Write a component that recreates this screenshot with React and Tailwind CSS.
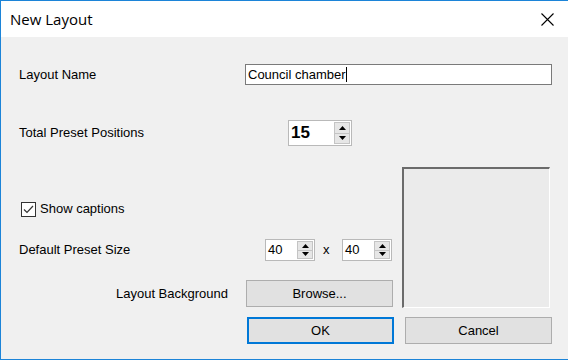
import React from 'react';

const font = { fontFamily: '"Liberation Sans", Arial, sans-serif' };

const Arrows = () => (
  <div className="flex flex-col w-[16px] h-full">
    <div className="flex-1 flex items-center justify-center bg-[#e6e6e6] border border-[#c4c4c4]">
      <svg width="7" height="4" viewBox="0 0 7 4"><path d="M3.5 0 L7 4 L0 4 Z" fill="#000" /></svg>
    </div>
    <div className="flex-1 flex items-center justify-center bg-[#e6e6e6] border border-t-0 border-[#c4c4c4]">
      <svg width="7" height="4" viewBox="0 0 7 4"><path d="M0 0 L7 0 L3.5 4 Z" fill="#000" /></svg>
    </div>
  </div>
);

const Spinner = ({ value, className, textClass }) => (
  <div className={`flex items-stretch bg-white border border-[#b9b9b9] p-[1px] ${className}`}>
    <div className={`flex-1 flex items-center pl-[1px] ${textClass}`}>{value}</div>
    <Arrows />
  </div>
);

const Button = ({ children, primary }) => (
  <div
    className={`w-[147px] h-[27px] flex items-center justify-center bg-[#e1e1e1] text-[13px] text-black ${
      primary ? 'border-2 border-[#0078d7]' : 'border border-[#adadad]'
    }`}
  >
    {children}
  </div>
);

export default function App() {
  return (
    <div
      style={font}
      className="w-[568px] h-[360px] flex flex-col bg-[#f0f0f0] border-t border-l border-b border-[#1c84d8] text-[13px] text-black overflow-hidden"
    >
      {/* title bar */}
      <div className="h-[36px] bg-white flex items-center justify-between pl-[9px] pr-[14px] shrink-0">
        <span className="text-[15px] pt-[1px]" style={{ fontFamily: '"Open Sans", "Noto Sans", sans-serif' }}>
          New Layout
        </span>
        <svg width="13" height="13" viewBox="0 0 13 13" className="mt-[1px]">
          <path d="M0.5 0.5 L12.5 12.5 M12.5 0.5 L0.5 12.5" stroke="#000" strokeWidth="1.1" />
        </svg>
      </div>

      {/* body */}
      <div className="flex flex-col pl-[18px] pt-[27px]">
        <div className="flex items-center h-[21px]">
          <span className="w-[226px]">Layout Name</span>
          <div className="w-[307px] h-[21px] bg-white border border-[#7a7a7a] flex items-center pl-[2px]">
            <span>Council chamber</span>
            <span className="w-[1px] h-[15px] bg-black" />
          </div>
        </div>

        <div className="flex items-center h-[26px] mt-[35px]">
          <span className="w-[269px]">Total Preset Positions</span>
          <Spinner value="15" className="w-[64px] h-[26px]" textClass="text-[17px] font-bold" />
        </div>

        <div className="flex mt-[21px]">
          <div className="w-[383px] flex flex-col">
            <div className="flex items-center h-[16px] mt-[34px] ml-[2px]">
              <div className="w-[15px] h-[15px] border border-[#333] bg-white flex items-center justify-center">
                <svg width="11" height="9" viewBox="0 0 11 9">
                  <path d="M1 4.5 L4 7.5 L10 1" stroke="#333" strokeWidth="1.2" fill="none" />
                </svg>
              </div>
              <span className="ml-[4px]">Show captions</span>
            </div>

            <div className="flex items-center h-[22px] mt-[22px]">
              <span className="w-[246px]">Default Preset Size</span>
              <Spinner value="40" className="w-[50px] h-[22px]" textClass="text-[13px]" />
              <span className="w-[27px] pl-[8px]">x</span>
              <Spinner value="40" className="w-[50px] h-[22px]" textClass="text-[13px]" />
            </div>

            <div className="flex items-center h-[27px] mt-[19px]">
              <span className="w-[209px] text-right">Layout Background</span>
              <div className="ml-[18px]">
                <Button>Browse...</Button>
              </div>
            </div>
          </div>

          <div className="w-[148px] h-[141px] border-t-2 border-l-2 border-[#6b6b6b] border-r border-b border-r-white border-b-white bg-[#ebebeb]" />
        </div>

        <div className="flex mt-[9px] ml-[228px] gap-[11px]">
          <Button primary>OK</Button>
          <Button>Cancel</Button>
        </div>
      </div>
    </div>
  );
}
